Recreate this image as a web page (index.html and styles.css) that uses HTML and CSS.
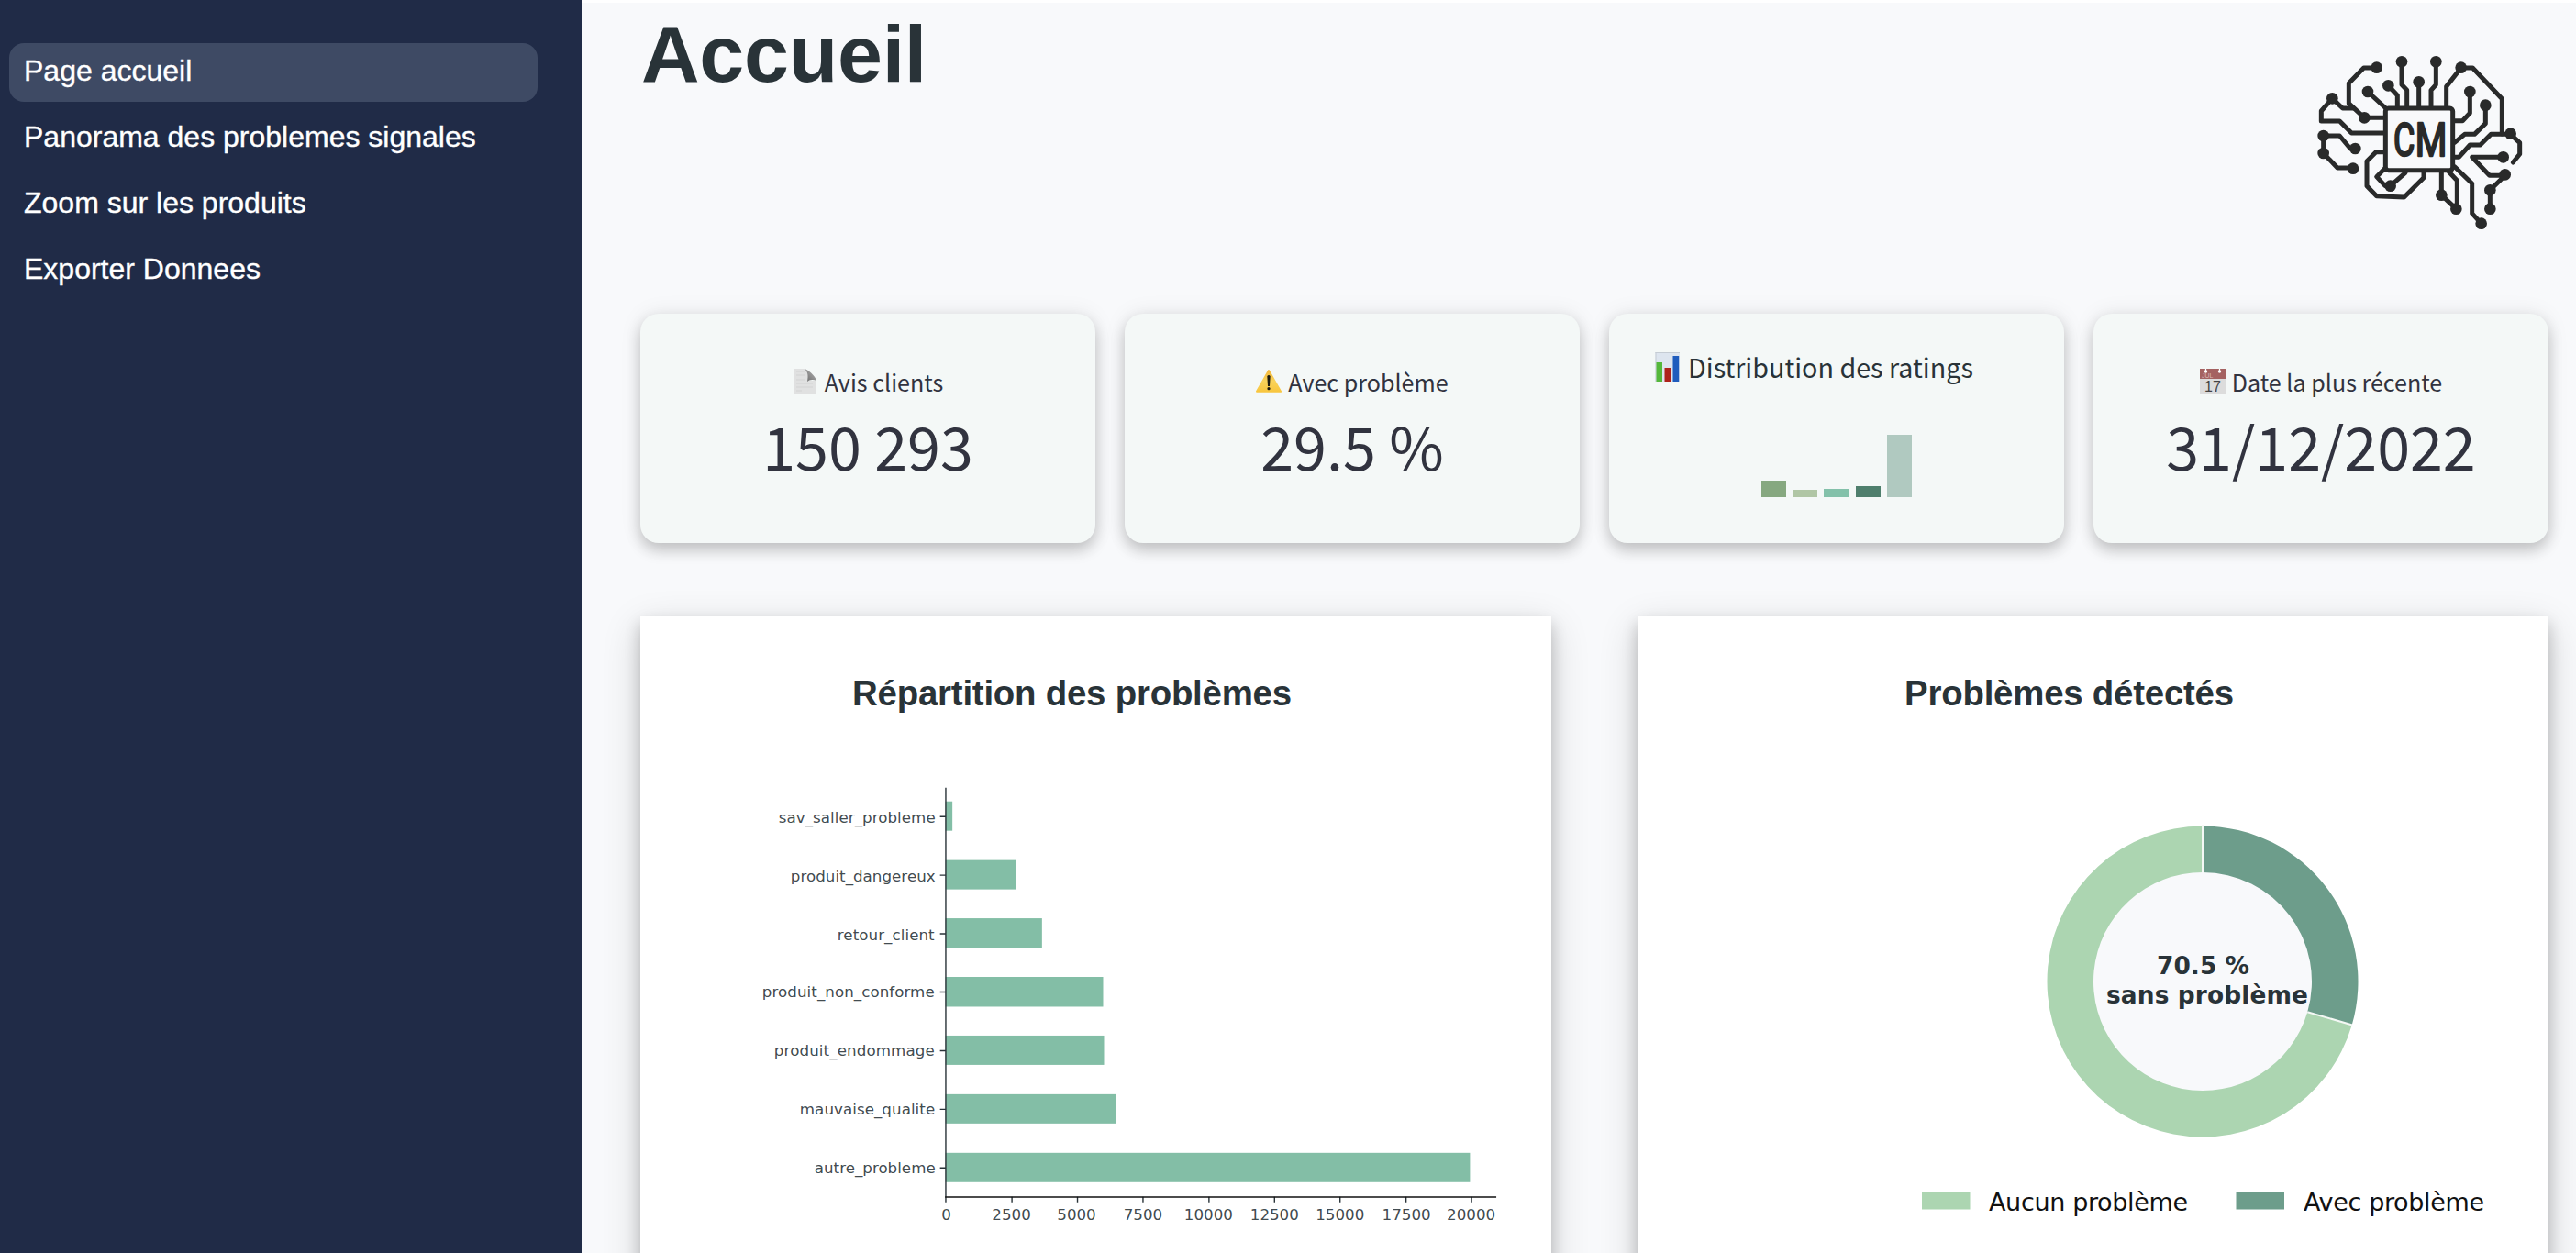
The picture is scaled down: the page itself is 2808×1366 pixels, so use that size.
FILE: index.html
```html
<!DOCTYPE html>
<html lang="fr">
<head>
<meta charset="utf-8">
<title>Accueil</title>
<link rel="stylesheet" href="styles.css">
</head>
<body>
<div class="app">
  <nav class="sidebar">
    <a class="nav-item active">Page accueil</a>
    <a class="nav-item">Panorama des problemes signales</a>
    <a class="nav-item">Zoom sur les produits</a>
    <a class="nav-item">Exporter Donnees</a>
  </nav>
  <main class="main">
    <header class="header">
      <h1 class="title">Accueil</h1>
      <svg class="logo" viewBox="0 0 840 690">
        <g class="trace">
          <path d="M272 102H230L181 152V218L232 265H298"/>
          <path d="M195 234H161L127 202L91 243V276H151L190 315H298"/>
          <path d="M243 180L302 234"/>
          <path d="M310 160L340 192V230"/>
          <path d="M354 82V157L371 175V230"/>
          <path d="M410 148V230"/>
          <path d="M466 82V157L450 175V230"/>
          <path d="M500 230V163L548 102H586L682 203V318"/>
          <path d="M577 180V250L553 275H525"/>
          <path d="M628 224V284L592 319H560L527 346"/>
          <path d="M527 394H541L577 354H611L646 319H710L740 347V384L718 411"/>
          <path d="M202 366H186L151 324H98V381L144 429H195"/>
          <path d="M298 377H270L240 407V488L272 521L362 525L426 461V442"/>
          <path d="M300 430L272 458L300 488H317L366 445"/>
          <path d="M484 440V518L532 563"/>
          <path d="M508 442L535 470V563"/>
          <path d="M528 426L584 480V578L614 611"/>
          <path d="M686 394H584L641 454H692L643 502V563"/>
          <rect x="301" y="234" width="220" height="203" rx="10"/>
        </g>
        <g class="pads">
          <circle cx="272" cy="101" r="19"/><circle cx="354" cy="82" r="19"/><circle cx="466" cy="82" r="19"/><circle cx="548" cy="101" r="19"/>
          <circle cx="310" cy="160" r="19"/><circle cx="243" cy="180" r="19"/><circle cx="410" cy="148" r="19"/><circle cx="577" cy="180" r="19"/>
          <circle cx="628" cy="224" r="19"/><circle cx="127" cy="202" r="19"/><circle cx="232" cy="265" r="19"/><circle cx="98" cy="324" r="19"/>
          <circle cx="202" cy="366" r="19"/><circle cx="98" cy="381" r="19"/><circle cx="195" cy="431" r="19"/><circle cx="317" cy="488" r="19"/>
          <circle cx="484" cy="518" r="19"/><circle cx="532" cy="563" r="19"/><circle cx="614" cy="611" r="19"/><circle cx="643" cy="563" r="19"/>
          <circle cx="643" cy="502" r="19"/><circle cx="692" cy="451" r="19"/><circle cx="686" cy="394" r="19"/><circle cx="710" cy="317" r="19"/>
        </g>
        <text class="logo-text" y="391"><tspan x="327" textLength="70" lengthAdjust="spacingAndGlyphs">C</tspan><tspan x="398" textLength="104" lengthAdjust="spacingAndGlyphs">M</tspan></text>
      </svg>
    </header>

    <section class="cards">
      <article class="card">
        <div class="label">
          <svg class="emoji" viewBox="0 0 28 28">
            <defs><linearGradient id="curl" x1="0" y1="1" x2="1" y2="0"><stop offset="0" stop-color="#666"/><stop offset=".6" stop-color="#999"/><stop offset="1" stop-color="#ddd"/></linearGradient></defs>
            <path d="M2 0H14C16.500 3 17 6 16.500 13H26V28H2Z" fill="#e0e1e1"/>
            <path d="M4 3H13M4 7H14M4 12H14M4 16H22M4 20H22M4 24H10" stroke="#d2d3d3" stroke-width="1"/>
            <path d="M13 0C17 1 25 8 26 13C22 11 18 12 16 14C17 8 17 4 13 0Z" fill="url(#curl)"/>
          </svg>
          <span>Avis clients</span>
        </div>
        <div class="value">150 293</div>
      </article>
      <article class="card">
        <div class="label">
          <svg class="emoji" viewBox="0 0 28 28">
            <defs><linearGradient id="warn" x1="0" y1="0" x2="0" y2="1"><stop offset="0" stop-color="#f3b73b"/><stop offset=".5" stop-color="#f9d35b"/><stop offset="1" stop-color="#f8c63f"/></linearGradient></defs>
            <path d="M14 2L27 24.800H1Z" fill="url(#warn)" stroke="url(#warn)" stroke-width="2" stroke-linejoin="round"/>
            <path d="M12.300 8Q14 6 15.700 8L15 19H13Z" fill="#1c1a10"/><circle cx="14" cy="21.700" r="1.600" fill="#1c1a10"/>
          </svg>
          <span>Avec problème</span>
        </div>
        <div class="value">29.5 %</div>
      </article>
      <article class="card card-chart">
        <div class="label label-large">
          <svg class="emoji-large" viewBox="0 0 28 32">
            <rect x=".5" width="26.500" height="32" fill="#dde5ef"/>
            <path d="M.5 .5H27M1 0V32" stroke="#c5ccd4" stroke-width="1"/>
            <rect x="1.500" y="11" width="6.500" height="21" fill="#54b83b"/>
            <rect x="10.500" y="17" width="6.500" height="15" fill="#ae221a"/>
            <rect x="19.500" y="4" width="6.700" height="28" fill="#1f5cbd"/>
          </svg>
          <span>Distribution des ratings</span>
        </div>
        <div class="ratings">
          <i class="rating r1"></i><i class="rating r2"></i><i class="rating r3"></i><i class="rating r4"></i><i class="rating r5"></i>
        </div>
      </article>
      <article class="card">
        <div class="label">
          <svg class="emoji" viewBox="0 0 28 28">
            <rect width="28" height="28" fill="#dcdcdc"/><rect width="28" height="11" fill="#a46261"/>
            <circle cx="6.500" cy="3" r="1.700" fill="#fff"/><circle cx="21.500" cy="3" r="1.700" fill="#fff"/>
            <path d="M6.500 0V3M21.500 0V3" stroke="#fff" stroke-width="1.200"/>
            <text class="cal-month" x="2" y="10">JUL</text>
            <text class="cal-day" x="14" y="25">17</text>
          </svg>
          <span>Date la plus récente</span>
        </div>
        <div class="value">31/12/2022</div>
      </article>
    </section>

    <section class="panels">
      <article class="panel">
        <h2 class="panel-title">Répartition des problèmes</h2>
        <svg class="chart" viewBox="698 779 994 587">
          <g class="bars">
            <rect x="1031" y="873.500" width="7.500" height="32"/>
            <rect x="1031" y="937.500" width="77.300" height="32"/>
            <rect x="1031" y="1001" width="105.300" height="32.500"/>
            <rect x="1031" y="1065" width="172" height="32.500"/>
            <rect x="1031" y="1129" width="173" height="32"/>
            <rect x="1031" y="1193" width="186.500" height="32"/>
            <rect x="1031" y="1257" width="572.300" height="32"/>
          </g>
          <path class="axis" d="M1031.300 858.500V1305M1025 890H1031M1025 954H1031M1025 1018H1031M1025 1081.500H1031M1025 1145.500H1031M1025 1209.500H1031M1025 1273.500H1031M1031.300 1305V1311M1103.500 1305V1311M1175 1305V1311M1246.500 1305V1311M1318.500 1305V1311M1390 1305V1311M1461.500 1305V1311M1533.500 1305V1311M1605 1305V1311"/>
          <path class="baseline" d="M1030.500 1305.300H1632"/>
          <g class="cat">
            <text x="1020" y="896.500" textLength="171">sav_saller_probleme</text>
            <text x="1020" y="960.500" textLength="158">produit_dangereux</text>
            <text x="1019" y="1024.500" textLength="106">retour_client</text>
            <text x="1019" y="1087" textLength="188">produit_non_conforme</text>
            <text x="1019" y="1151" textLength="175">produit_endommage</text>
            <text x="1019.500" y="1215" textLength="147.500">mauvaise_qualite</text>
            <text x="1020" y="1279" textLength="132">autre_probleme</text>
          </g>
          <g class="tick">
            <text x="1032" y="1330.500">0</text><text x="1103" y="1330.500">2500</text><text x="1174" y="1330.500">5000</text>
            <text x="1246.500" y="1330.500">7500</text><text x="1318" y="1330.500">10000</text><text x="1390" y="1330.500">12500</text>
            <text x="1461.500" y="1330.500">15000</text><text x="1534" y="1330.500">17500</text><text x="1604.500" y="1330.500">20000</text>
          </g>
        </svg>
      </article>
      <article class="panel">
        <h2 class="panel-title">Problèmes détectés</h2>
        <svg class="chart" viewBox="1785 779 993 587">
          <circle class="hole" cx="2401" cy="1070" r="122"/>
          <path class="slice without" d="M2401 900.500A169.500 169.500 0 1 0 2563.770 1117.290L2515.270 1103.200A119 119 0 1 1 2401 951Z"/>
          <path class="slice with" d="M2401 900.500A169.500 169.500 0 0 1 2563.770 1117.290L2515.270 1103.200A119 119 0 0 0 2401 951Z"/>
          <path class="cut" d="M2401 899V951M2515.270 1103.200L2564.250 1117.430"/>
          <g class="center">
            <text x="2351" y="1062.300" textLength="101">70.5 %</text>
            <text x="2296" y="1093.500" textLength="220">sans problème</text>
          </g>
          <rect class="without" x="2095" y="1300" width="52.500" height="18.500"/>
          <rect class="with" x="2437.500" y="1300" width="52.500" height="18.500"/>
          <g class="legend">
            <text x="2168" y="1319.500" textLength="217">Aucun problème</text>
            <text x="2511" y="1319.500" textLength="197">Avec problème</text>
          </g>
        </svg>
      </article>
    </section>
  </main>
</div>
</body>
</html>
```
FILE: styles.css
```css
* { box-sizing: border-box; }

body {
  margin: 0;
  overflow: hidden;
  color: #262730;
  font-family: "Liberation Sans", Arial, sans-serif;
}

.app { display: flex; height: 1366px; overflow: hidden; background: #f8f9fb; }

/* Sidebar */
.sidebar {
  display: flex;
  flex: none;
  flex-direction: column;
  gap: 8px;
  width: 634px;
  padding: 47px 48px 0 10px;
  background: #202b47;
}
.nav-item {
  height: 64px;
  padding-left: 16px;
  border-radius: 16px;
  color: #fff;
  font-size: 32px;
  line-height: 60px;
  white-space: nowrap;
  -webkit-text-stroke: .35px #fff;
}
.nav-item.active { background: #3e4a64; }

/* Header */
.main { flex: 1; min-width: 0; padding: 0 30px 0 64px; border-top: 3px solid #fff; }
.header { display: flex; justify-content: space-between; height: 339px; }
.title {
  margin: 3px 0 0 1px;
  color: #293338;
  font-size: 88px;
  line-height: 106px;
  letter-spacing: -.3px;
}
.logo { width: 280px; height: 230px; margin: 37px -2px 0 0; }
.trace { fill: none; stroke: #292a2a; stroke-width: 15; stroke-linejoin: round; stroke-linecap: round; }
.pads { fill: #292a2a; }
.logo-text { fill: #292a2a; stroke: #292a2a; stroke-width: 7; stroke-linejoin: round; font: 150px Roboto, sans-serif; }

/* Metric cards */
.cards { display: flex; gap: 32px; }
.card {
  flex: 1;
  height: 250px;
  padding-top: 54px;
  border-radius: 20px;
  background: #f4f8f7;
  box-shadow: 0 8px 16px rgba(0, 0, 0, .2), 0 0 24px rgba(0, 0, 0, .08);
  font-family: "Noto Sans CJK JP", sans-serif;
}
.label {
  display: flex;
  align-items: center;
  justify-content: center;
  gap: 7px;
  height: 40px;
  color: #31333f;
  font-size: 25.1px;
  line-height: 40px;
  white-space: nowrap;
}
.emoji { width: 28px; height: 28px; }
.emoji-large { width: 28px; height: 32px; }
.cal-month { fill: #d9b5b4; font: 7px "Liberation Sans", sans-serif; }
.cal-day { fill: #444; font: 16px "Liberation Sans", sans-serif; text-anchor: middle; }
.value {
  color: #31333f;
  font-size: 64.6px;
  line-height: 98px;
  text-align: center;
  white-space: nowrap;
}
.card-chart { padding-top: 38px; }
.label-large { justify-content: flex-start; gap: 8px; padding-left: 50px; color: #293338; font-size: 28.7px; }
.ratings { display: flex; align-items: flex-end; gap: 7px; height: 122px; padding-left: 166px; }
.rating { width: 27.200px; }
.r1 { height: 18px; background: #86a880; }
.r2 { height: 8px; background: #b0c6a5; }
.r3 { height: 9px; background: #83c1aa; }
.r4 { height: 12.500px; background: #4f7f6d; }
.r5 { height: 68px; background: #b0c9c0; }

/* Chart panels */
.panels { display: flex; gap: 94px; margin-top: 80px; }
.panel {
  flex: 1;
  min-width: 0;
  height: 800px;
  padding-top: 61px;
  background: #fff;
  box-shadow: 0 8px 16px rgba(0, 0, 0, .2), 0 12px 40px rgba(0, 0, 0, .16);
}
.panel-title {
  margin: 0;
  padding-right: 52px;
  color: #293338;
  font-size: 38.400px;
  line-height: 46px;
  letter-spacing: -.22px;
  text-align: center;
}
.chart { display: block; width: 100%; height: 587px; font-family: "DejaVu Sans", sans-serif; }
.bars { fill: #83bea6; }
.axis { fill: none; stroke: #293338; stroke-width: 1.400; }
.baseline { stroke: #111; stroke-width: 1.600; }
.cat, .tick { fill: #293338; fill-opacity: .9; font-size: 16.700px; }
.cat { text-anchor: end; }
.tick { text-anchor: middle; }
.hole { fill: #f8f9fb; }
.without { fill: #acd5b1; }
.with { fill: #6d9d8b; }
.cut { stroke: #f4f8f5; stroke-width: 2; }
.center { fill: #293338; font-size: 26.400px; font-weight: bold; }
.legend { fill: #111; font-size: 27px; }
```
